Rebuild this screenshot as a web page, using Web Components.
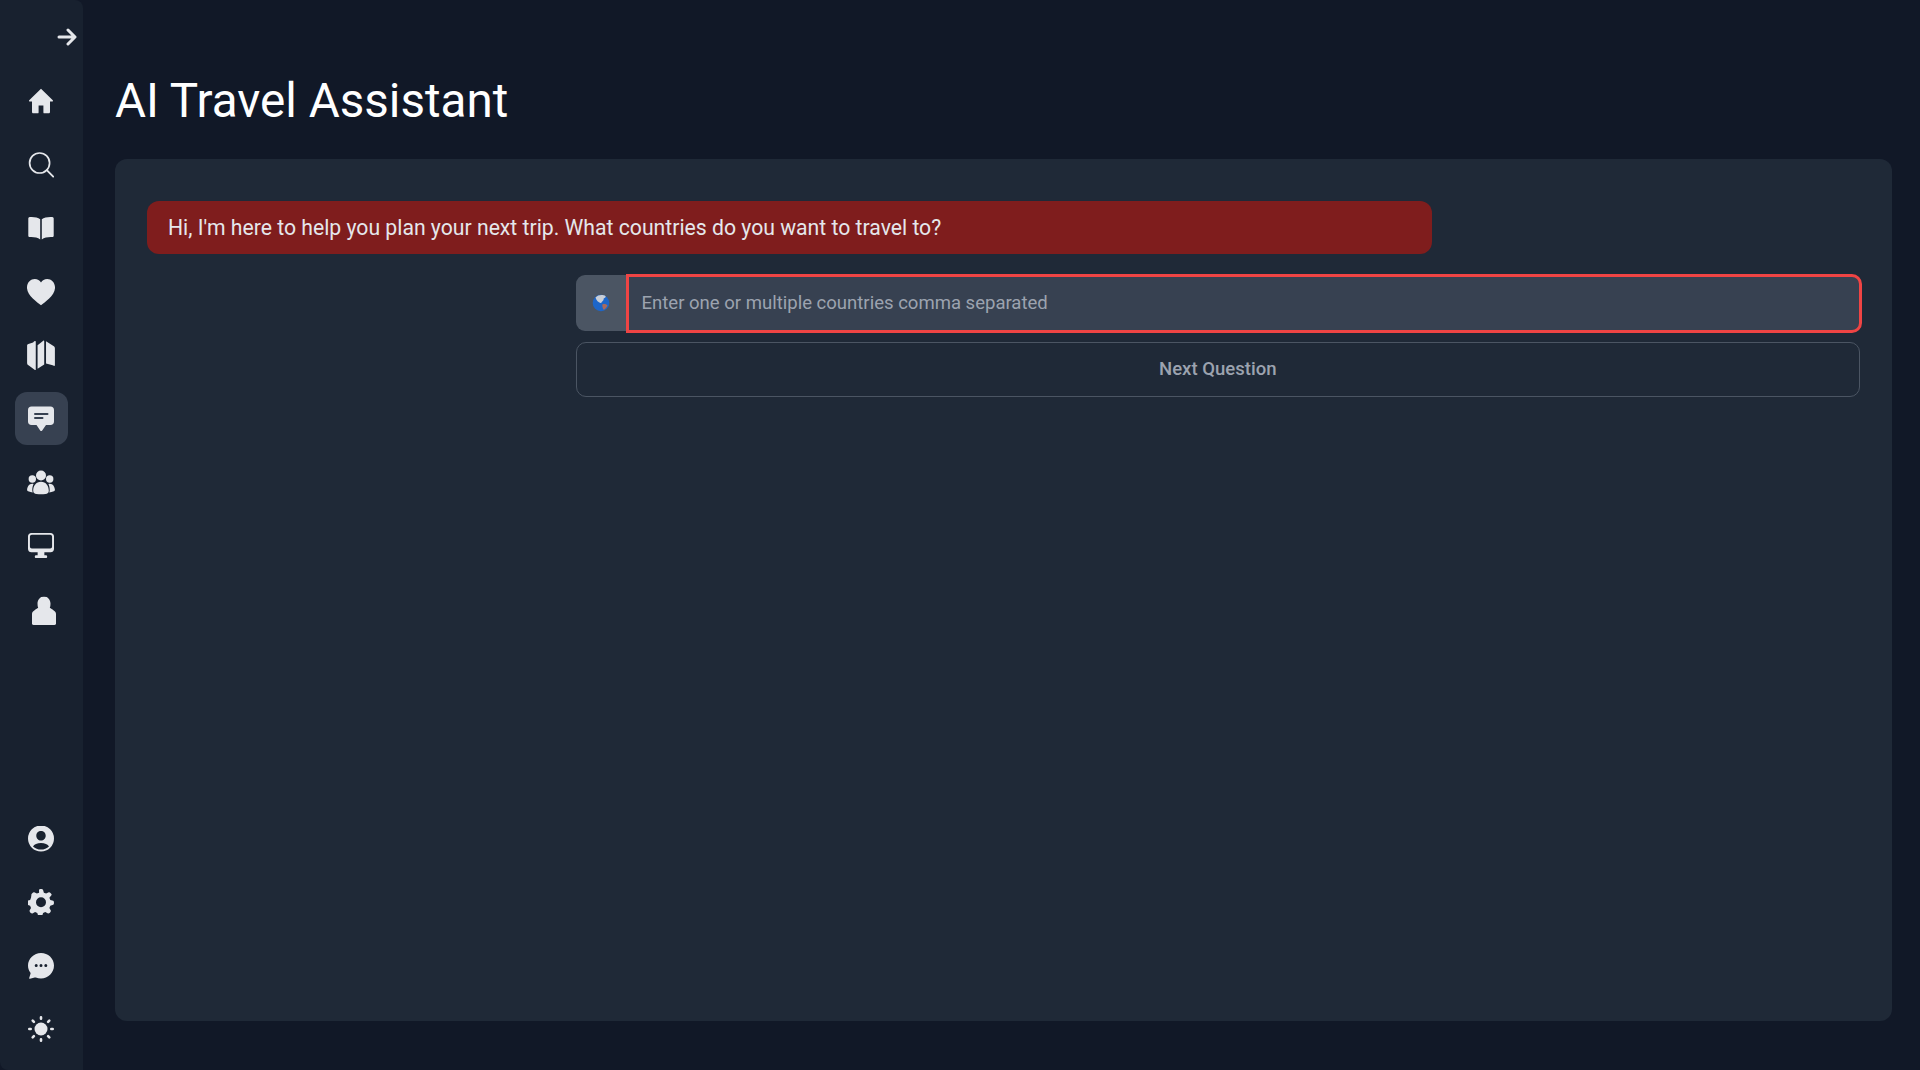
<!DOCTYPE html>
<html lang="en"><head><meta charset="utf-8"><title>AI Travel Assistant</title>
<style>
html,body{margin:0;height:100%;background:#111827;font-family:Roboto,"Liberation Sans",sans-serif}
body{height:1070px;overflow:hidden}
</style></head><body>
<app-shell>
<side-bar slot="nav"></side-bar>
<page-title>AI Travel Assistant</page-title>
<chat-panel>
<chat-bubble>Hi, I'm here to help you plan your next trip. What countries do you want to travel to?</chat-bubble>
<answer-form placeholder="Enter one or multiple countries comma separated" action="Next Question"></answer-form>
</chat-panel>
</app-shell>
<script>
class AppShell extends HTMLElement{constructor(){super();this.attachShadow({mode:'open'}).innerHTML=`<style>
:host{display:flex;height:1070px;width:1920px;background:#111827}
main{flex:1;min-width:0;display:flex;flex-direction:column;padding:0 28px 49px 32px}
</style><slot name="nav"></slot><main><slot></slot></main>`}}
const I={
home:'<path d="M13 .8 1.200 12.300c-.5.500-.1 1.300.5 1.300H4v10.400c0 .8.600 1.300 1.300 1.300h4.400c.5 0 .9-.4.9-.9v-6.900h4.800v6.900c0 .5.400.9.900.9h4.400c.7 0 1.300-.5 1.300-1.300V13.600h2.300c.6 0 1-.8.5-1.300z"/>',
search:'<circle cx="11.600" cy="11.600" r="10" fill="none" stroke="currentColor" stroke-width="1.700"/><path d="m18.800 18.800 6.400 6.400" fill="none" stroke="currentColor" stroke-width="1.900" stroke-linecap="round"/>',
book:'<path d="M12.200 5.300C10 3.300 5.600 2.700 1.700 3 .9 3.100.3 3.700.3 4.500v17.200c0 .8.700 1.400 1.500 1.300 4-.2 7.800.4 10.400 2.400zM13.800 5.300c2.200-2 6.600-2.600 10.500-2.300.8.100 1.400.7 1.400 1.500v17.200c0 .8-.7 1.400-1.500 1.300-4-.2-7.800.4-10.400 2.400z"/>',
heart:'<path d="M13 25.200C9.500 22.400-.5 15.800 0 8.400.3 3.800 3.500.9 7.200.9c2.600 0 4.600 1.300 5.800 3.300C14.200 2.200 16.200.9 18.800.9c3.700 0 6.900 2.900 7.200 7.500.5 7.400-9.500 14-13 16.800z"/>',
map:'<path d="M8.100 1.300C7.300.8 6.800 1.100 6.200 1.700L5.600 2.300 1.200 3.700C.5 3.900 0 4.500 0 5.200v16.200c0 1 .6 1.700 1.300 2.300l6 4.300c.5.300.8 0 .8-.4zM9.800 27 16 23V1.200c0-.6-.5-.8-.9-.5L9.800 5zM17.700 1.100l6.600 4.300c1.100.7 1.700 1.300 1.700 2.400v15.800c0 .6-.5.900-1.100.6l-1-.6-6.200-1.700z"/>',
chat:'<path d="M4.500 1.500h19c2.200 0 3.500 1.300 3.500 3.500v11.500c0 2.200-1.300 3.500-3.500 3.500H19l-3.800 5.500c-.6.800-1.500.8-2 0L9.500 20H4.500C2.300 20 1 18.700 1 16.500V5c0-2.200 1.300-3.500 3.500-3.500z"/><path d="M8 9h12.500M8 13h7.500" fill="none" stroke="#374151" stroke-width="2" stroke-linecap="round"/>',
users:'<circle cx="14" cy="6" r="5"/><circle cx="5.300" cy="9.500" r="3.700"/><circle cx="22.700" cy="9.500" r="3.700"/><path d="M14 12.200c5 0 7.800 4.100 7.800 9 0 2.200-1.300 3-3.300 3.300-2.900.4-6.100.4-9 0-2-.3-3.300-1.100-3.300-3.300 0-4.900 2.800-9 7.800-9zM5.200 14.300c.4 0 1 .1 1.400.3-.8 1.700-1.300 3.800-1.300 6 0 .9.100 1.700.5 2.300-1.500-.1-3-.6-4.700-1.100-.8-.3-1.100-.9-1-1.700.3-3 2-5.800 5.100-5.800zM22.800 14.300c3.100 0 4.800 2.800 5.100 5.800.1.800-.2 1.400-1 1.700-1.700.5-3.200 1-4.700 1.100.4-.6.500-1.400.5-2.300 0-2.200-.5-4.300-1.300-6 .4-.2 1-.3 1.400-.3z"/>',
desktop:'<path fill-rule="evenodd" d="M3.500 0h20C25.400 0 27 1.500 27 3.500v13c0 2-1.600 3.500-3.500 3.500H17v3h1.600c1.800 0 1.800 3 0 3H8.400c-1.800 0-1.800-3 0-3H10v-3H3.500C1.600 20 0 18.500 0 16.500v-13C0 1.500 1.600 0 3.500 0zM4 1.800c-1.200 0-2 .8-2 2V14c0 1.200.8 2 2 2h19c1.200 0 2-.8 2-2V3.800c0-1.200-.8-2-2-2z"/>',
lock:'<path d="M12 0c3.900 0 6.500 3.300 6.500 7.200 0 1.500-.2 3-.7 4.300 1.300.4 2.300 1.200 3.900 2.400 1.500 1.100 2.300 2 2.300 3.600V27c0 1-.6 1.400-1.500 1.400H1.500C.6 28.400 0 28 0 27v-9.500c0-1.600.8-2.500 2.300-3.600 1.600-1.200 2.600-2 3.900-2.400-.5-1.300-.7-2.800-.7-4.300C5.500 3.300 8.100 0 12 0z"/>',
user:'<path fill-rule="evenodd" d="M13 0a13 13 0 1 0 0 26 13 13 0 0 0 0-26zm0 5.500c2.700 0 4.700 2.100 4.700 4.700s-2 4.800-4.700 4.800-4.700-2.200-4.700-4.800 2-4.700 4.700-4.700zm0 18.600c-3 0-5.900-1.200-8-3.200 1-2 4.300-3.400 8-3.400s7 1.400 8 3.400c-2.100 2-5 3.200-8 3.200z"/>',
gear:'<path fill-rule="evenodd" d="M11 .8c.3-1 3.700-1 4 0l.9 2.900 2.200.9 2.700-1.400c.9-.5 3.300 1.900 2.800 2.800L21.400 8.700l.9 2.200 2.900.9c1 .3 1 3.700 0 4l-2.900.9-.9 2.200 1.400 2.700c.5.900-1.900 3.300-2.800 2.800l-2.700-1.400-2.200.9-.9 2.900c-.3 1-3.700 1-4 0l-.9-2.900-2.200-.9-2.700 1.400c-.9.500-3.300-1.900-2.800-2.800l1.400-2.700-.9-2.200-2.900-.9c-1-.3-1-3.700 0-4l2.900-.9.9-2.200L3.400 6c-.5-.9 1.900-3.300 2.800-2.800l2.700 1.400 2.200-.9zM13 8.300a5 5 0 1 0 0 10 5 5 0 0 0 0-10z"/>',
more:'<path fill-rule="evenodd" d="M13 0C6 0 0 5.600 0 12.500c0 2.600.8 5 2.300 7.100.3.400.3.700.2 1.100L1.200 25c-.2.600.2.900.8.800l4.700-1.300c.4-.1.700-.1 1.100.1 1.600.7 3.400.9 5.200.9 7 0 13-5.800 13-13S20 0 13 0zM8.200 11a1.500 1.500 0 1 1 0 3 1.500 1.500 0 0 1 0-3zm4.800 0a1.500 1.500 0 1 1 0 3 1.500 1.500 0 0 1 0-3zm4.800 0a1.500 1.500 0 1 1 0 3 1.500 1.500 0 0 1 0-3z"/>',
sun:'<circle cx="13" cy="13" r="6.500"/><g stroke="currentColor" stroke-width="2.600" stroke-linecap="round" fill="none"><path d="M13 1.300v1.400M13 23.300v1.400M1.300 13h1.400M23.300 13h1.400M4.700 4.700l1.200 1.200M20.100 20.100l1.200 1.200M4.700 21.300l1.200-1.200M20.100 5.900l1.200-1.200"/></g>'
};
class NavIcon extends HTMLElement{connectedCallback(){const n=this.getAttribute('name');const vb={heart:'0 0 26 26',chat:'0 0 28 28',users:'0 -1.500 28 28',desktop:'0 0 27 27',map:'0 0 26 29',lock:'0 0 24 29',book:'0 1 26 26',search:'0 .6 26 26',user:'0 .5 26 26'}[n]||'0 0 26 26';const sz={heart:[28,28],chat:[28,28],users:[28,28],map:[28,31],lock:[24,29]}[n]||[26,26];
this.attachShadow({mode:'open'}).innerHTML=`<style>
:host{display:flex;width:53px;height:53px;border-radius:12px;align-items:center;justify-content:center;color:#e5e7eb}
:host([active]){background:#374151}
:host([name=lock]) svg{transform:translate(3px,1.500px)}
svg{display:block;fill:currentColor}
</style><svg width="${sz[0]}" height="${sz[1]}" viewBox="${vb}" aria-hidden="true">${I[n]}</svg>`}}
class SideBar extends HTMLElement{constructor(){super();this.attachShadow({mode:'open'}).innerHTML=`<style>
:host{display:flex;flex:none;flex-direction:column;width:83px;height:1070px;box-sizing:border-box;background:#18212f;padding:27px 0 14.500px;border-radius:0 8px 0 8px}
.top{display:flex;justify-content:flex-end;padding-right:6px;color:#e5e7eb;margin-bottom:27.500px}
.top svg{display:block}
.g{display:flex;flex-direction:column;gap:10.500px;align-items:center}
nav-icon{margin-left:-1px}
.sp{flex:1}
</style>
<div class="top"><svg width="20" height="20" viewBox="0 0 20 20" fill="none" stroke="currentColor" stroke-width="3" stroke-linecap="round" stroke-linejoin="round"><path d="M2 10h15.500M11 3l7 7-7 7"/></svg></div>
<div class="g"><nav-icon name="home"></nav-icon><nav-icon name="search"></nav-icon><nav-icon name="book"></nav-icon><nav-icon name="heart"></nav-icon><nav-icon name="map"></nav-icon><nav-icon name="chat" active></nav-icon><nav-icon name="users"></nav-icon><nav-icon name="desktop"></nav-icon><nav-icon name="lock"></nav-icon></div>
<div class="sp"></div>
<div class="g"><nav-icon name="user"></nav-icon><nav-icon name="gear"></nav-icon><nav-icon name="more"></nav-icon><nav-icon name="sun"></nav-icon></div>`}}
class PageTitle extends HTMLElement{constructor(){super();this.attachShadow({mode:'open'}).innerHTML=`<style>
:host{display:block;flex:none;padding:73px 0 30px;font-size:47.600px;line-height:56px;font-weight:400;color:#fff}
</style><slot></slot>`}}
class ChatPanel extends HTMLElement{constructor(){super();this.attachShadow({mode:'open'}).innerHTML=`<style>
:host{display:flex;flex:1;flex-direction:column;gap:20px;background:#1f2937;border-radius:12px;padding:42px 32px 32px}
</style><slot></slot>`}}
class ChatBubble extends HTMLElement{constructor(){super();this.attachShadow({mode:'open'}).innerHTML=`<style>
:host{display:block;box-sizing:border-box;width:1285px;height:53px;line-height:54px;padding:0 21px;background:#7f1d1d;border-radius:12px;color:#e5e7eb;font-size:21.200px}
</style><slot></slot>`}}
class AnswerForm extends HTMLElement{connectedCallback(){this.attachShadow({mode:'open'}).innerHTML=`<style>
:host{display:flex;flex-direction:column;gap:9px;width:1284.500px;margin-left:auto}
.row{display:flex;height:58.500px;width:1286.500px}
.pre{flex:none;width:50.500px;margin:1px 0 1.500px;background:#4b5563;border-radius:9px 0 0 9px;display:flex;align-items:center;justify-content:center}
.in{flex:1;box-sizing:border-box;border:3px solid #ef4444;border-radius:0 10px 10px 0;background:#374151;color:#9ca3af;font:18.550px Roboto,sans-serif;display:flex;align-items:center;padding:0 0 1px 12.500px}
.btn{box-sizing:border-box;height:55.500px;border:1px solid #4b5563;border-radius:10px;display:flex;align-items:center;justify-content:center;color:#9ca3af;font-size:18.550px;font-weight:500;padding-bottom:1px}
svg{display:block}
</style>
<div class="row"><div class="pre"><svg width="18" height="18" viewBox="0 0 18 18"><circle cx="9" cy="9" r="8.300" fill="#1d66c9"/><path d="M3.500 3.500C6 .4 11 .4 13.500 2c.6 1.500-.7 1.800-1.800 2.500.2 1-.6 2.600-1.700 3.200-.5 1-1 1.500-1.500 1.300C6.500 8.500 4.300 6.500 3.500 3.500z" fill="#c9ced6"/><path d="M10.500 10.200c1.700-.6 3.700-.2 5 1-.6 2-1.800 3.400-3.800 4.600-.8-1.400-1.900-3.700-1.200-5.600z" fill="#a86a5c"/></svg></div><div class="in">${this.getAttribute('placeholder')}</div></div>
<div class="btn">${this.getAttribute('action')}</div>`}}
customElements.define('nav-icon',NavIcon);customElements.define('side-bar',SideBar);customElements.define('app-shell',AppShell);customElements.define('page-title',PageTitle);customElements.define('chat-panel',ChatPanel);customElements.define('chat-bubble',ChatBubble);customElements.define('answer-form',AnswerForm);
</script></body></html>
